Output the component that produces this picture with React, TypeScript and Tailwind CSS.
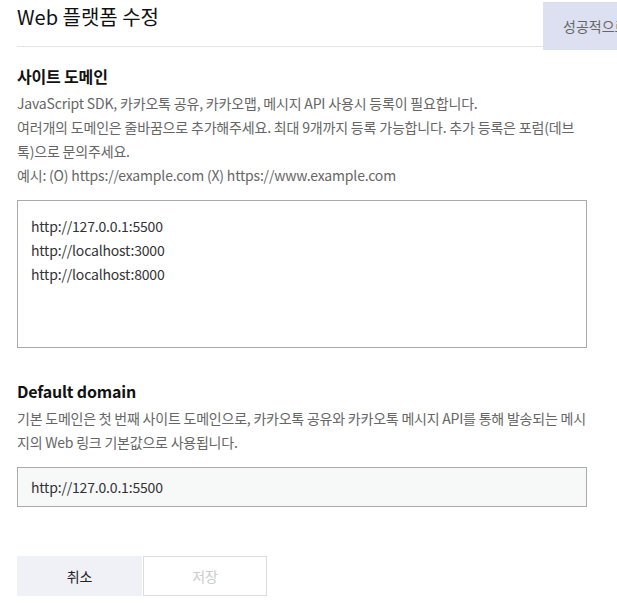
export default function App() {
  return (
    <div
      className="relative w-[617px] h-[603px] overflow-hidden bg-white"
      style={{ fontFamily: '"Noto Sans CJK KR", "Noto Sans", sans-serif' }}
    >
      <div className="px-[17px] w-[604px]">
        <div className="h-[47px] flex items-center border-b border-[#e5e5e5]">
          <h1 className="text-[20px] leading-[26px] text-[#111] -mt-[12px]">Web 플랫폼 수정</h1>
        </div>

        <section className="mt-[17px] w-[570px] tracking-[-0.18px]">
          <h2 className="text-[16px] leading-[24px] font-bold text-[#111]">사이트 도메인</h2>
          <div className="mt-[3px] text-[14px] leading-[24px] text-[#666]">
            <p>JavaScript SDK, 카카오톡 공유, 카카오맵, 메시지 API 사용시 등록이 필요합니다.</p>
            <p>
              여러개의 도메인은 줄바꿈으로 추가해주세요. 최대 9개까지 등록 가능합니다. 추가 등록은 포럼(데브톡)으로
              문의주세요.
            </p>
            <p>예시: (O) https://example.com (X) https://www.example.com</p>
          </div>
          <div className="mt-[13px] h-[148px] border border-[#aaa] px-[13px] pt-[13px] text-[14px] leading-[24px] text-[#333]">
            <div>http://127.0.0.1:5500</div>
            <div>http://localhost:3000</div>
            <div>http://localhost:8000</div>
          </div>
        </section>

        <section className="mt-[31px] w-[570px] tracking-[-0.18px]">
          <h2 className="text-[16px] leading-[24px] font-bold text-[#111]">Default domain</h2>
          <p className="mt-[3px] text-[14px] leading-[24px] text-[#666] tracking-[-0.22px]">
            기본 도메인은 첫 번째 사이트 도메인으로, 카카오톡 공유와 카카오톡 메시지 API를 통해 발송되는 메시지의 Web
            링크 기본값으로 사용됩니다.
          </p>
          <div className="mt-[13px] h-[40px] border border-[#aaa] bg-[#f7f8f8] px-[13px] flex items-center text-[14px] text-[#333]">
            http://127.0.0.1:5500
          </div>
        </section>

        <div className="mt-[49px] flex gap-[1px] tracking-[-0.18px]">
          <button className="w-[125px] h-[40px] bg-[#f0f1f6] text-[14px] text-[#222]">취소</button>
          <button className="w-[124px] h-[40px] border border-[#dcdcdc] bg-white text-[14px] text-[#ccc]">저장</button>
        </div>
      </div>

      <div className="absolute left-[543px] top-[2px] w-[74px] h-[48px] overflow-hidden bg-[#dde0f1] flex items-center pl-[20px] text-[14px] text-[#666] whitespace-nowrap">
        성공적으로 수정되었습니다.
      </div>
    </div>
  );
}
